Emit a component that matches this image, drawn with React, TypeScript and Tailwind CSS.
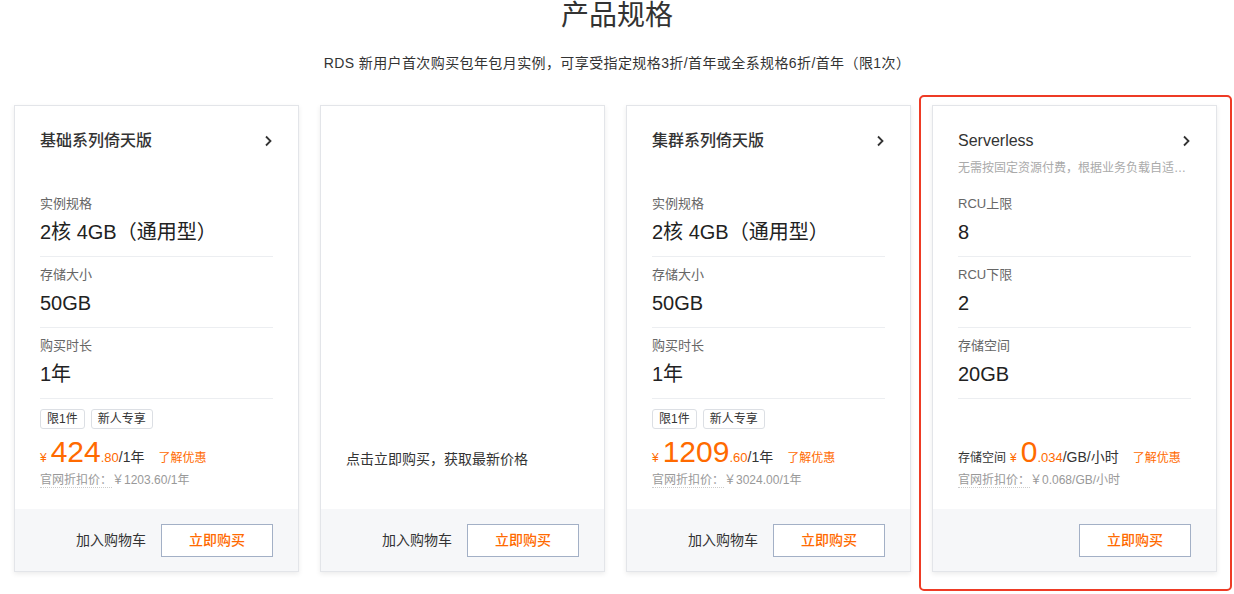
const font = "font-['Liberation_Sans','Noto_Sans_CJK_SC',sans-serif]";

type Row = { label: string; value: string };

const baseRows: Row[] = [
  { label: "实例规格", value: "2核 4GB（通用型）" },
  { label: "存储大小", value: "50GB" },
  { label: "购买时长", value: "1年" },
];

const serverlessRows: Row[] = [
  { label: "RCU上限", value: "8" },
  { label: "RCU下限", value: "2" },
  { label: "存储空间", value: "20GB" },
];

function Chevron() {
  return (
    <svg width="10" height="12" viewBox="0 0 10 12" className="text-[#333]">
      <polyline points="3,1.5 7.5,6 3,10.5" fill="none" stroke="currentColor" strokeWidth="1.8" />
    </svg>
  );
}

function Rows({ rows }: { rows: Row[] }) {
  return (
    <div className="mt-[9px]">
      {rows.map((r) => (
        <div key={r.label} className="border-b border-[#eceef1] pt-[9px] pb-[10px]">
          <div className="text-[13px] leading-[18px] text-[#666]">{r.label}</div>
          <div className="mt-[5px] text-[20px] leading-[28px] text-[#222]">{r.value}</div>
        </div>
      ))}
    </div>
  );
}

function Tags() {
  return (
    <div className="mt-[10px] flex gap-[6px]">
      <span className="h-[20px] rounded-[3px] border border-[#dcdfe4] px-[6px] text-[12px] leading-[18px] text-[#333]">限1件</span>
      <span className="h-[20px] rounded-[3px] border border-[#dcdfe4] px-[6px] text-[12px] leading-[18px] text-[#333]">新人专享</span>
    </div>
  );
}

function Official({ text }: { text: string }) {
  return (
    <div className="whitespace-nowrap text-[12px] leading-[18px] text-[#999]">
      <span className="border-b border-dotted border-[#ccc]">官网折扣价：</span>
      {text}
    </div>
  );
}

function Price({ prefix, int, dec, unit, official }: { prefix?: string; int: string; dec: string; unit: string; official: string }) {
  return (
    <div className="mt-auto">
      <div className="flex h-[36px] items-baseline whitespace-nowrap pt-[2px]">
        {prefix && <span className="mr-[4px] text-[12px] text-[#333]">{prefix}</span>}
        <span className="mr-[4px] text-[12px] text-[#ff6a00]">¥</span>
        <span className="text-[30px] leading-none text-[#ff6a00]">{int}</span>
        <span className="text-[13px] text-[#ff6a00]">{dec}</span>
        <span className="text-[14px] text-[#333]">{unit}</span>
        <span className="ml-[14px] text-[12px] text-[#ff6a00]">了解优惠</span>
      </div>
      <Official text={official} />
    </div>
  );
}

function Footer({ cart = true }: { cart?: boolean }) {
  return (
    <div className="flex h-[62px] items-center justify-end gap-[15px] bg-[#f6f7f9] pr-[25px]">
      {cart && <span className="text-[14px] text-[#333]">加入购物车</span>}
      <button className="h-[33px] w-[112px] border border-[#a3b0c6] bg-white text-[14px] font-medium text-[#ff6a00]">立即购买</button>
    </div>
  );
}

function Card({ children, footer, highlight }: { children: React.ReactNode; footer: React.ReactNode; highlight?: boolean }) {
  return (
    <div className="relative w-[285px]">
      {highlight && (
        <div className="absolute -top-[10px] -right-[15px] -bottom-[19px] -left-[13px] rounded-[5px] border-2 border-[#ee3b25]" />
      )}
      <div className="relative flex h-[467px] flex-col border border-[#e3e5e9] bg-white shadow-[0_2px_5px_rgba(0,0,0,0.08)]">
        <div className="flex flex-1 flex-col px-[25px] pt-[23px] pb-[20px]">{children}</div>
        {footer}
      </div>
    </div>
  );
}

function Header({ title, sub }: { title: string; sub?: string }) {
  return (
    <>
      <div className="flex h-[24px] items-center justify-between">
        <span className="text-[16px] font-medium text-[#333]">{title}</span>
        <Chevron />
      </div>
      <div className="mt-[6px] h-[18px] truncate text-[12px] leading-[18px] text-[#aaa]">{sub}</div>
    </>
  );
}

export default function App() {
  return (
    <div className={`${font} min-h-[594px] bg-white`}>
      <h1 className="text-center text-[28px] leading-[32px] text-[#333]">产品规格</h1>
      <p className="mt-[21px] text-center text-[14px] leading-[20px] tracking-[0.4px] text-[#333]">
        RDS 新用户首次购买包年包月实例，可享受指定规格3折/首年或全系规格6折/首年（限1次）
      </p>
      <div className="mt-[32px] flex gap-[21px] pl-[14px]">
        <Card footer={<Footer />}>
          <Header title="基础系列倚天版" />
          <Rows rows={baseRows} />
          <Tags />
          <Price int="424" dec=".80" unit="/1年" official="￥1203.60/1年" />
        </Card>
        <Card footer={<Footer />}>
          <div className="mt-auto">
            <div className="text-[14px] leading-[20px] text-[#333]">点击立即购买，获取最新价格</div>
            <div className="h-[20px]" />
          </div>
        </Card>
        <Card footer={<Footer />}>
          <Header title="集群系列倚天版" />
          <Rows rows={baseRows} />
          <Tags />
          <Price int="1209" dec=".60" unit="/1年" official="￥3024.00/1年" />
        </Card>
        <Card footer={<Footer cart={false} />} highlight>
          <Header title="Serverless" sub="无需按固定资源付费，根据业务负载自适应调整计算资源" />
          <Rows rows={serverlessRows} />
          <Price prefix="存储空间" int="0" dec=".034" unit="/GB/小时" official="￥0.068/GB/小时" />
        </Card>
      </div>
    </div>
  );
}
